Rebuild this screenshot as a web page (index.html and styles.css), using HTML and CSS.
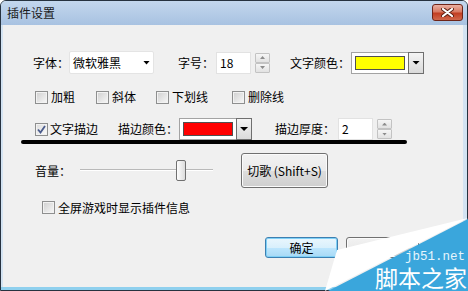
FILE: index.html
```html
<!DOCTYPE html>
<html>
<head>
<meta charset="utf-8">
<link rel="stylesheet" href="styles.css">
</head>
<body>
<div class="window">
  <div class="titlebar">
    <span class="title">插件设置</span>
    <span class="close">
      <svg width="13" height="9" viewBox="0 0 13 9">
        <path d="M2 1 L11 8 M11 1 L2 8" stroke="#5b1f12" stroke-width="4" stroke-linecap="round"/>
        <path d="M2 1 L11 8 M11 1 L2 8" stroke="#fff" stroke-width="2.2" stroke-linecap="round"/>
      </svg>
    </span>
  </div>

  <div class="client">
    <!-- font row -->
    <div class="row r1">
      <span class="lbl">字体：</span>
      <div class="select"><span>微软雅黑</span><span class="arrow"></span></div>
      <span class="lbl ml24">字号：</span>
      <div class="edit ml2">18</div>
      <div class="spin ml4"><span class="up"></span><span class="down"></span></div>
      <span class="lbl ml20">文字颜色：</span>
      <div class="picker ml1"><span class="field"><span class="swatch yellow"></span></span><span class="drop"></span></div>
    </div>

    <!-- style options -->
    <div class="r2">
      <label class="chk"><span class="box"></span>加粗</label>
      <label class="chk"><span class="box"></span>斜体</label>
      <label class="chk"><span class="box"></span>下划线</label>
      <label class="chk"><span class="box"></span>删除线</label>
    </div>

    <!-- outline row -->
    <div class="row r3">
      <label class="chk tight"><span class="box checked">
        <svg width="9" height="9" viewBox="0 0 9 9"><path d="M1 4.5 L3.5 7.5 L8 1" stroke="#4a5b8c" stroke-width="1.8" fill="none"/></svg>
      </span>文字描边</label>
      <span class="lbl ml20">描边颜色：</span>
      <div class="picker ml1"><span class="field"><span class="swatch red"></span></span><span class="drop"></span></div>
      <span class="lbl ml23">描边厚度：</span>
      <div class="edit ml3">2</div>
      <div class="spin ml4"><span class="up"></span><span class="down"></span></div>
    </div>

    <!-- volume -->
    <div class="row r4">
      <span class="lbl">音量：</span>
      <div class="slider ml9"><span class="thumb"></span></div>
      <button class="btn big ml28">切歌 (Shift+S)</button>
    </div>

    <div class="row r5">
      <label class="chk"><span class="box"></span>全屏游戏时显示插件信息</label>
    </div>

    <div class="row r6">
      <button class="btn ok">确定</button>
      <button class="btn cancel">取消</button>
    </div>
  </div>
  <div class="frame-bottom"></div>

  <div class="mark"></div>

  <div class="wm">
    <svg width="148" height="81" viewBox="0 0 148 81">
      <polygon points="148,8 17,40 5,81" fill="#fff"/>
      <polygon points="148,9 8,81 148,81" fill="#3aa6dc"/>
    </svg>
    <div class="wm-text">
      <span class="wm-url">jb51.net</span>
      <span class="wm-name">脚本之家</span>
    </div>
  </div>
</div>
</body>
</html>
```

FILE: styles.css
```css
* {
  box-sizing: border-box;
}
body {
  margin: 0;
  font-family: "Noto Sans CJK SC", "Microsoft YaHei", sans-serif;
  font-size: 12px;
  line-height: 16px;
  color: #000;
}
/* window frame */
.window {
  position: relative;
  width: 468px;
  height: 291px;
  background: #d3e3f2;
  border: 1px solid #26323f;
  border-radius: 6px 6px 0 0;
  display: flex;
  flex-direction: column;
}
.titlebar {
  height: 24px;
  flex: none;
  display: flex;
  justify-content: space-between;
  padding-left: 6px;
  border-radius: 5px 5px 0 0;
  background: linear-gradient(#c3d7ed, #a8c2e1);
}
.title {
  line-height: 24px;
  color: #1a1a1a;
}
.close {
  width: 31px;
  height: 17px;
  margin: 3px 4px 0 0;
  display: flex;
  align-items: center;
  justify-content: center;
  border: 1px solid #6e2418;
  border-radius: 3px;
  background: linear-gradient(#eab0a2 0%, #d87a63 45%, #c23e22 55%, #d0684c 100%);
}
.client {
  flex: none;
  height: 262px;
  margin: 0 4px 0 2px;
  padding: 26px 0 0 30px;
  background: #f0f0f0;
  display: flex;
  flex-direction: column;
}
.frame-bottom {
  height: 3px;
  background: #8fd0ee;
}
.row {
  display: flex;
  align-items: center;
}
.r1 { height: 23px; }
.r2 {
  height: 13px;
  margin: 15px 0 0 2px;
  display: grid;
  grid-template-columns: 61px 60px 76px auto;
  align-items: center;
}
.r3 { height: 22px; margin: 16px 0 0 2px; }
.r4 { height: 35px; margin: 13px 0 0 2px; }
.r5 { height: 13px; margin: 13px 0 0 9px; }
.r6 { height: 21px; margin: 23px 0 0 232px; }

.ml1 { margin-left: 1px; }
.ml2 { margin-left: 2px; }
.ml3 { margin-left: 3px; }
.ml4 { margin-left: 4px; }
.ml9 { margin-left: 9px; }
.ml20 { margin-left: 20px; }
.ml23 { margin-left: 23px; }
.ml24 { margin-left: 24px; }
.ml28 { margin-left: 28px; }

.lbl {
  white-space: nowrap;
}
/* combo box */
.select {
  width: 85px;
  height: 23px;
  background: #fff;
  border: 1px solid #e4e4e4;
  border-radius: 2px;
  display: flex;
  align-items: center;
  justify-content: space-between;
  padding: 0 3px 0 3px;
}
.arrow {
  width: 7px;
  height: 4px;
  background: #000;
  clip-path: polygon(0 0, 100% 0, 50% 100%);
}
/* edit + spinner */
.edit {
  width: 35px;
  height: 22px;
  background: #fff;
  border: 1px solid #e2e2e2;
  padding-left: 3px;
  display: flex;
  align-items: center;
}
.spin {
  width: 15px;
  height: 20px;
  display: flex;
  flex-direction: column;
}
.spin span {
  flex: 1;
  border: 1px solid #c3c3c3;
  border-radius: 1px;
  background: linear-gradient(#f6f6f6, #e2e2e2);
  display: flex;
  align-items: center;
  justify-content: center;
}
.spin span::after {
  content: "";
  width: 5px;
  height: 3px;
  background: #8c8c8c;
}
.spin .up::after {
  clip-path: polygon(50% 0, 100% 100%, 0 100%);
}
.spin .down::after {
  clip-path: polygon(0 0, 100% 0, 50% 100%);
}
/* colour picker */
.picker {
  display: flex;
  height: 22px;
}
.field {
  width: 57px;
  border: 1px solid #a3a3a3;
  border-right: none;
  background: #fff;
  padding: 3px 0 0 3px;
}
.swatch {
  display: block;
  width: 50px;
  height: 14px;
  border: 1px solid #505050;
}
.yellow { background: #ffff00; }
.red { background: #ff0000; }
.drop {
  width: 16px;
  border: 1px solid #6f6f6f;
  background: linear-gradient(#f4f4f4, #dadada);
  display: flex;
  align-items: center;
  justify-content: center;
}
.drop::after {
  content: "";
  width: 8px;
  height: 4px;
  background: #000;
  clip-path: polygon(0 0, 100% 0, 50% 100%);
}
/* checkboxes */
.chk {
  display: inline-flex;
  align-items: center;
  gap: 3px;
  white-space: nowrap;
}
.chk.tight {
  gap: 2px;
}
.box {
  width: 13px;
  height: 13px;
  flex: none;
  border: 1px solid #8e8f8f;
  background: linear-gradient(135deg, #cfcfcf, #f8f8f8);
  box-shadow: inset 0 0 0 1px #f2f2f2;
  display: flex;
  align-items: center;
  justify-content: center;
}
.box.checked {
  background: linear-gradient(135deg, #dcdcdc, #fbfbfb);
}
/* slider */
.slider {
  width: 133px;
  height: 21px;
  background: linear-gradient(#b9b9b9, #b9b9b9) 0 9px / 100% 1px no-repeat,
              linear-gradient(#ffffff, #ffffff) 0 10px / 100% 1px no-repeat;
}
.thumb {
  display: block;
  width: 10px;
  height: 21px;
  margin-left: 96px;
  border: 1px solid #707070;
  border-radius: 2px;
  background: linear-gradient(90deg, #fdfdfd, #dcdcdc);
}
/* buttons */
.btn {
  font: inherit;
  color: #000;
  padding: 0;
  border: 1px solid #707070;
  border-radius: 3px;
  background: linear-gradient(#f2f2f2 0%, #ebebeb 50%, #dddddd 51%, #cfcfcf 100%);
  box-shadow: inset 0 0 0 1px #fbfbfb;
}
.big {
  width: 87px;
  height: 35px;
}
.ok {
  width: 73px;
  height: 21px;
  border-color: #3c7fb1;
  background: linear-gradient(#eaf6fd 0%, #d9f0fc 50%, #bee6fd 51%, #a7d9f5 100%);
  box-shadow: inset 0 0 0 1px #7fd0f6;
}
.cancel {
  width: 73px;
  height: 21px;
  margin-left: 8px;
}
/* hand-drawn marker under the outline row */
.mark {
  position: absolute;
  left: 20px;
  top: 139px;
  width: 386px;
  height: 4px;
  border-radius: 2px;
  background: #000;
}
/* site watermark */
.wm {
  position: absolute;
  right: -1px;
  bottom: -1px;
  width: 148px;
  height: 81px;
}
.wm svg {
  display: block;
}
.wm-text {
  position: absolute;
  right: 1px;
  top: 41px;
  display: flex;
  flex-direction: column;
  align-items: flex-end;
}
.wm-url {
  font-family: "Liberation Mono", monospace;
  font-size: 12.5px;
  line-height: 12px;
  color: #e6f5fd;
  margin: 0 2px 1px 0;
}
.wm-name {
  font-size: 23px;
  line-height: 26px;
  color: #fff;
}
```
